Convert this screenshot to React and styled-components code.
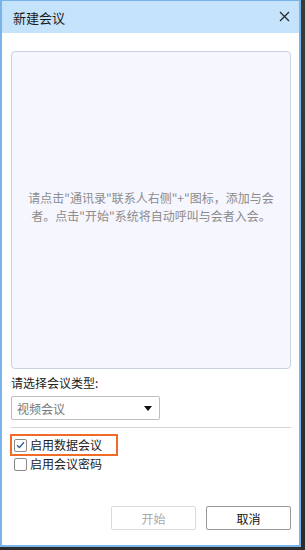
import React, { useState } from "react";
import styled, { createGlobalStyle } from "styled-components";

const GlobalStyle = createGlobalStyle`
  html, body {
    margin: 0;
    padding: 0;
    background: #3a3a3a;
  }
  body {
    font-family: "Noto Sans CJK SC", "Noto Sans", sans-serif;
    font-size: 12px;
  }
`;

const Page = styled.div`
  width: 305px;
  height: 550px;
  background: linear-gradient(#3a3a3a, #2c2c2c);
`;

const Window = styled.div`
  width: 301px;
  height: 547px;
  box-sizing: border-box;
  border: 2px solid #78b3ea;
  border-top-width: 1px;
  background: #fff;
  display: flex;
  flex-direction: column;
`;

const TitleBar = styled.div`
  height: 32px;
  flex-shrink: 0;
  background: #c5e4fc;
  display: flex;
  align-items: center;
  justify-content: space-between;
  padding: 0 8px 0 11px;
  color: #1a1a1a;
  font-size: 13px;
`;

const CloseButton = styled.button`
  width: 14px;
  height: 14px;
  padding: 0;
  border: none;
  background: transparent;
  display: flex;
  align-items: center;
  justify-content: center;
  margin-top: -2px;
  cursor: pointer;
`;

const Body = styled.div`
  flex: 1;
  display: flex;
  flex-direction: column;
  padding: 18px 8px 15px 9px;
`;

const MessagePanel = styled.div`
  height: 318px;
  box-sizing: border-box;
  border: 1px solid #c9d1e2;
  border-radius: 4px;
  background: #f6f6ff;
  display: flex;
  align-items: center;
  justify-content: center;
  text-align: center;
  padding: 0 10px 6px;
  color: #8c8c8c;
  font-size: 12px;
  line-height: 18px;
`;

const FieldLabel = styled.div`
  margin-top: 6px;
  line-height: 16px;
  color: #222;
`;

const Select = styled.div`
  margin-top: 5px;
  width: 149px;
  height: 24px;
  box-sizing: border-box;
  border: 1px solid #bdbdbd;
  border-radius: 2px;
  display: flex;
  align-items: center;
  justify-content: space-between;
  padding: 0 7px 0 5px;
  color: #777;
`;

const Caret = styled.span`
  width: 0;
  height: 0;
  border-left: 4px solid transparent;
  border-right: 4px solid transparent;
  border-top: 5px solid #111;
`;

const Divider = styled.div`
  margin-top: 7px;
  height: 1px;
  background: #d4d4d4;
`;

const Options = styled.div`
  margin-top: 6px;
  display: flex;
  flex-direction: column;
`;

const OptionRow = styled.label`
  display: flex;
  align-items: center;
  gap: 3px;
  height: ${(p) => (p.$highlight ? "18px" : "14px")};
  width: ${(p) => (p.$highlight ? "102px" : "auto")};
  margin-left: ${(p) => (p.$highlight ? "-1px" : "3px")};
  padding-left: ${(p) => (p.$highlight ? "2px" : "0")};
  border: ${(p) => (p.$highlight ? "2px solid #f06a28" : "none")};
  margin-bottom: ${(p) => (p.$highlight ? "1px" : "0")};
  color: #222;
  line-height: 14px;
  cursor: pointer;
`;

const Box = styled.span`
  width: 13px;
  height: 13px;
  box-sizing: border-box;
  border: 1px solid #8a8a8a;
  border-radius: 2px;
  background: #fff;
  display: flex;
  align-items: center;
  justify-content: center;
`;

const Footer = styled.div`
  margin-top: auto;
  display: flex;
  justify-content: flex-end;
  gap: 10px;
`;

const Button = styled.button`
  width: 85px;
  height: 24px;
  box-sizing: border-box;
  border: 1px solid ${(p) => (p.disabled ? "#dcdcdc" : "#979797")};
  border-radius: 2px;
  background: #fff;
  color: ${(p) => (p.disabled ? "#a8a8a8" : "#111")};
  font-family: "Noto Sans CJK SC", "Noto Sans", sans-serif;
  font-size: 12px;
  padding: 0;
  cursor: ${(p) => (p.disabled ? "default" : "pointer")};
`;

function Checkbox({ checked }) {
  return (
    <Box>
      {checked && (
        <svg width="9" height="8" viewBox="0 0 9 8">
          <path d="M1 4.2 L3.4 6.5 L8 1.2" fill="none" stroke="#2f5f9e" strokeWidth="1.3" />
        </svg>
      )}
    </Box>
  );
}

export default function App() {
  const [dataMeeting, setDataMeeting] = useState(true);
  const [password, setPassword] = useState(false);

  return (
    <>
      <GlobalStyle />
      <Page>
        <Window>
          <TitleBar>
            <span>新建会议</span>
            <CloseButton aria-label="关闭">
              <svg width="11" height="11" viewBox="0 0 11 11">
                <path d="M1 1 L10 10 M10 1 L1 10" stroke="#2a2a2a" strokeWidth="1.3" />
              </svg>
            </CloseButton>
          </TitleBar>
          <Body>
            <MessagePanel>
              请点击"通讯录"联系人右侧"+"图标，添加与会
              <br />
              者。点击"开始"系统将自动呼叫与会者入会。
            </MessagePanel>
            <FieldLabel>请选择会议类型:</FieldLabel>
            <Select>
              <span>视频会议</span>
              <Caret />
            </Select>
            <Divider />
            <Options>
              <OptionRow $highlight onClick={() => setDataMeeting(!dataMeeting)}>
                <Checkbox checked={dataMeeting} />
                启用数据会议
              </OptionRow>
              <OptionRow onClick={() => setPassword(!password)}>
                <Checkbox checked={password} />
                启用会议密码
              </OptionRow>
            </Options>
            <Footer>
              <Button disabled>开始</Button>
              <Button>取消</Button>
            </Footer>
          </Body>
        </Window>
      </Page>
    </>
  );
}
